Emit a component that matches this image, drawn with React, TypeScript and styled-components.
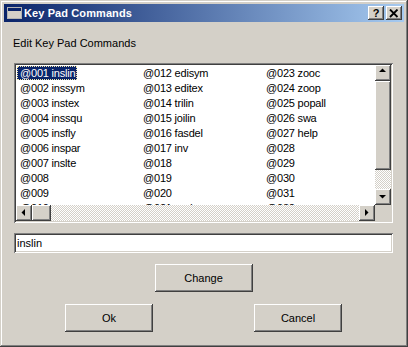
import React from "react";
import styled, { createGlobalStyle } from "styled-components";

const GlobalStyle = createGlobalStyle`
  html, body {
    margin: 0;
    padding: 0;
    background: #d4d0c8;
  }
  body {
    font-family: "Liberation Sans", Arial, sans-serif;
    font-size: 11px;
    color: #000;
  }
`;

const raised = `
  background: #d4d0c8;
  box-shadow: inset -1px -1px #404040, inset 1px 1px #ffffff,
    inset -2px -2px #808080, inset 2px 2px #d4d0c8;
`;

const sunken = `
  background: #ffffff;
  box-shadow: inset 1px 1px #808080, inset -1px -1px #ffffff,
    inset 2px 2px #404040, inset -2px -2px #d4d0c8;
`;

const Window = styled.div`
  width: 408px;
  height: 347px;
  box-sizing: border-box;
  padding: 4px;
  display: flex;
  flex-direction: column;
  background: #d4d0c8;
  box-shadow: inset -1px -1px #404040, inset 1px 1px #d4d0c8,
    inset -2px -2px #808080, inset 2px 2px #ffffff;
`;

const TitleBar = styled.div`
  height: 18px;
  display: flex;
  align-items: center;
  padding: 0 2px;
  background: linear-gradient(to right, #0a246a, #a6caf0);
`;

const TitleText = styled.span`
  margin-left: 2px;
  color: #fff;
  font-weight: bold;
  font-size: 11px;
  letter-spacing: 0.1px;
`;

const TitleButtons = styled.div`
  margin-left: auto;
  display: flex;
  gap: 2px;
`;

const CaptionButton = styled.div`
  ${raised}
  width: 16px;
  height: 14px;
  display: flex;
  align-items: center;
  justify-content: center;
  font-weight: bold;
  font-size: 11px;
  line-height: 14px;
`;

const Body = styled.div`
  flex: 1;
  display: flex;
  flex-direction: column;
  padding: 15px 11px 0 10px;
`;

const Label = styled.div`
  height: 13px;
  line-height: 13px;
  margin-left: -1px;
`;

const ListBox = styled.div`
  ${sunken}
  margin-top: 13px;
  height: 160px;
  box-sizing: border-box;
  padding: 2px;
  display: grid;
  grid-template-columns: 1fr 16px;
  grid-template-rows: 1fr 16px;
`;

const Items = styled.div`
  overflow: hidden;
  padding: 1px 0 0 1px;
  display: flex;
`;

const Column = styled.div`
  width: 123px;
  flex: none;
  display: flex;
  flex-direction: column;
`;

const Item = styled.div`
  height: 15px;
  flex: none;
`;

const ItemLabel = styled.span<{ $selected?: boolean }>`
  display: inline-block;
  height: 14px;
  line-height: 14px;
  padding: 0 2px 0 3px;
  letter-spacing: -0.2px;
  white-space: nowrap;
  background: ${(p) => (p.$selected ? "#0a246a" : "transparent")};
  color: ${(p) => (p.$selected ? "#fff" : "#000")};
  outline: ${(p) => (p.$selected ? "1px dotted #f3e6a8" : "none")};
  outline-offset: -1px;
`;

const VScroll = styled.div`
  display: flex;
  flex-direction: column;
`;

const HScroll = styled.div`
  display: flex;
`;

const Corner = styled.div`
  background: #d4d0c8;
`;

const ArrowButton = styled.div`
  ${raised}
  width: 16px;
  height: 16px;
  flex: none;
  display: flex;
  align-items: center;
  justify-content: center;
`;

const Thumb = styled.div<{ $size: number; $vertical?: boolean }>`
  ${raised}
  flex: none;
  ${(p) => (p.$vertical ? `height: ${p.$size}px;` : `width: ${p.$size}px;`)}
`;

const Track = styled.div`
  flex: 1;
  background: repeating-conic-gradient(#d4d0c8 0 25%, #ffffff 0 50%) 0 0 / 2px 2px;
`;

const TextField = styled.div`
  ${sunken}
  margin-top: 10px;
  height: 20px;
  box-sizing: border-box;
  padding: 0 3px;
  display: flex;
  align-items: center;
`;

const Button = styled.div<{ $width: number }>`
  ${raised}
  width: ${(p) => p.$width}px;
  height: 28px;
  display: flex;
  align-items: center;
  justify-content: center;
`;

const ChangeRow = styled.div`
  margin-top: 11px;
  display: flex;
  justify-content: center;
`;

const ButtonRow = styled.div`
  margin-top: 12px;
  display: flex;
  justify-content: center;
  gap: 101px;
`;

const WindowIcon = () => (
  <svg width="16" height="16" viewBox="0 0 16 16">
    <rect x="1.5" y="2.5" width="14" height="11" fill="#d4d0c8" stroke="#fff" />
    <rect x="2" y="3" width="13" height="3" fill="#0a246a" />
    <rect x="1.5" y="2.5" width="14" height="11" fill="none" stroke="#808080" strokeOpacity="0.6" />
  </svg>
);

const Arrow = ({ dir }: { dir: "up" | "down" | "left" | "right" }) => {
  const pts = {
    up: "4,7 7.5,3.5 11,7",
    down: "4,6 11,6 7.5,9.5",
    left: "9,4 9,11 5.5,7.5",
    right: "6,4 6,11 9.5,7.5",
  }[dir];
  return (
    <svg width="16" height="16" viewBox="0 0 16 16">
      <polygon points={pts} fill="#000" />
    </svg>
  );
};

const CloseGlyph = () => (
  <svg width="10" height="9" viewBox="0 0 10 9">
    <path d="M1 0.5 L8.5 8 M8.5 0.5 L1 8" stroke="#000" strokeWidth="1.8" />
  </svg>
);

const columns = [
  ["@001 inslin", "@002 inssym", "@003 instex", "@004 inssqu", "@005 insfly", "@006 inspar", "@007 inslte", "@008", "@009", "@010"],
  ["@012 edisym", "@013 editex", "@014 trilin", "@015 joilin", "@016 fasdel", "@017 inv", "@018", "@019", "@020", "@021 undo"],
  ["@023 zooc", "@024 zoop", "@025 popall", "@026 swa", "@027 help", "@028", "@029", "@030", "@031", "@032"],
];

export default function App() {
  return (
    <>
      <GlobalStyle />
      <Window>
        <TitleBar>
          <WindowIcon />
          <TitleText>Key Pad Commands</TitleText>
          <TitleButtons>
            <CaptionButton>?</CaptionButton>
            <CaptionButton>
              <CloseGlyph />
            </CaptionButton>
          </TitleButtons>
        </TitleBar>
        <Body>
          <Label>Edit Key Pad Commands</Label>
          <ListBox>
            <Items>
              {columns.map((col, c) => (
                <Column key={c}>
                  {col.map((text) => (
                    <Item key={text}>
                      <ItemLabel $selected={text === "@001 inslin"}>{text}</ItemLabel>
                    </Item>
                  ))}
                </Column>
              ))}
            </Items>
            <VScroll>
              <ArrowButton>
                <Arrow dir="up" />
              </ArrowButton>
              <Thumb $vertical $size={89} />
              <Track />
              <ArrowButton>
                <Arrow dir="down" />
              </ArrowButton>
            </VScroll>
            <HScroll>
              <ArrowButton>
                <Arrow dir="left" />
              </ArrowButton>
              <Thumb $size={19} />
              <Track />
              <ArrowButton>
                <Arrow dir="right" />
              </ArrowButton>
            </HScroll>
            <Corner />
          </ListBox>
          <TextField>inslin</TextField>
          <ChangeRow>
            <Button $width={98}>Change</Button>
          </ChangeRow>
          <ButtonRow>
            <Button $width={88}>Ok</Button>
            <Button $width={88}>Cancel</Button>
          </ButtonRow>
        </Body>
      </Window>
    </>
  );
}
